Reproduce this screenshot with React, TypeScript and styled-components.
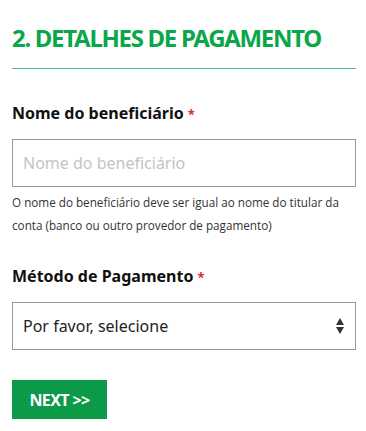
import styled, { createGlobalStyle } from "styled-components";

const Global = createGlobalStyle`
    body {
        margin: 0;
        background: #fff;
        font-family: "Noto Sans", "Open Sans", sans-serif;
    }
    * { box-sizing: border-box; }
`;

const Form = styled.form`
    display: flex;
    flex-direction: column;
    padding: 22px 10px 0 12px;
`;

const Heading = styled.h2`
    margin: 0;
    font-family: "Noto Sans", sans-serif;
    font-size: 24px;
    line-height: 32px;
    font-weight: 700;
    color: #0aa64a;
    letter-spacing: -1.3px;
`;

const Divider = styled.hr`
    margin: 14px 0 0;
    border: none;
    height: 1px;
    background: #4cc07c;
`;

const Label = styled.label<{ $gap: number }>`
    margin-top: ${(p) => p.$gap}px;
    font-size: 16px;
    line-height: 22px;
    font-weight: 700;
    color: #111;
`;

const Star = styled.span`
    color: #e0282e;
    font-size: 13px;
    margin-left: 4px;
`;

const Field = styled.div`
    margin-top: 14px;
    height: 48px;
    border: 1px solid #999;
    display: flex;
    align-items: center;
    justify-content: space-between;
    padding: 0 11px 0 10px;
    font-size: 16px;
`;

const Placeholder = styled.span`
    color: #c4c4c4;
`;

const Value = styled.span`
    color: #222;
`;

const Help = styled.p`
    margin: 4px 0 0;
    font-family: "Open Sans", sans-serif;
    font-size: 11.7px;
    line-height: 23px;
    color: #333;
`;

const Arrows = styled.svg`
    width: 8px;
    height: 16px;
`;

const Next = styled.button`
    margin-top: 30px;
    align-self: flex-start;
    width: 95px;
    height: 39px;
    border: none;
    background: #0b9a48;
    color: #fff;
    font-family: "Noto Sans", sans-serif;
    font-weight: 700;
    font-size: 16px;
    letter-spacing: -0.6px;
`;

export default function App() {
    return (
        <>
            <Global />
            <Form>
                <Heading>2. DETALHES DE PAGAMENTO</Heading>
                <Divider />
                <Label $gap={33}>
                    Nome do beneficiário<Star>*</Star>
                </Label>
                <Field>
                    <Placeholder>Nome do beneficiário</Placeholder>
                </Field>
                <Help>
                    O nome do beneficiário deve ser igual ao nome do titular da conta (banco ou outro provedor de pagamento)
                </Help>
                <Label $gap={28}>
                    Método de Pagamento<Star>*</Star>
                </Label>
                <Field>
                    <Value>Por favor, selecione</Value>
                    <Arrows viewBox="0 0 8 16">
                        <path d="M4 0 L8 7 L0 7 Z M4 16 L8 9 L0 9 Z" fill="#333" />
                    </Arrows>
                </Field>
                <Next type="button">NEXT &gt;&gt;</Next>
            </Form>
        </>
    );
}
